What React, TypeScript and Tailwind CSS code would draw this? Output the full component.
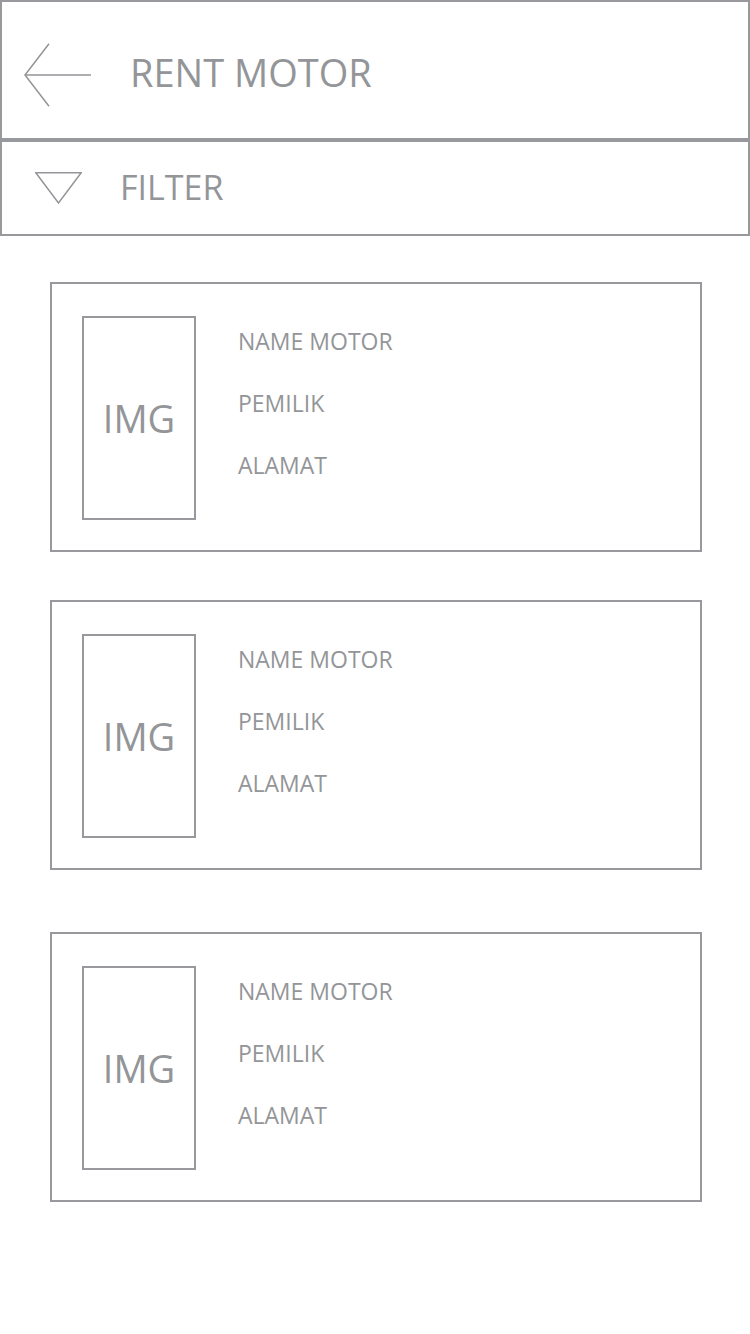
const gray = "#939598";

function MotorCard({ className = "" }: { className?: string }) {
  return (
    <div className={`h-[270px] border-2 border-[#97999c] flex items-start pl-[30px] pt-[32px] ${className}`}>
      <div className="w-[114px] h-[204px] border-2 border-[#97999c] flex items-center justify-center">
        <span className="text-[38px] leading-none text-[#939598]">IMG</span>
      </div>
      <div className="ml-[42px] pt-[10px] flex flex-col gap-[32px] text-[23px] leading-[30px] text-[#939598]">
        <span>NAME MOTOR</span>
        <span>PEMILIK</span>
        <span>ALAMAT</span>
      </div>
    </div>
  );
}

export default function App() {
  return (
    <div
      className="w-[750px] min-h-[1334px] bg-white"
      style={{ fontFamily: '"Open Sans", "Noto Sans", sans-serif' }}
    >
      {/* header */}
      <div className="h-[140px] border-2 border-[#97999c] flex items-start">
        <svg
          className="ml-[22px] mt-[41px]"
          width="68"
          height="64"
          viewBox="0 0 68 64"
          fill="none"
          stroke={gray}
          strokeWidth="1.5"
        >
          <path d="M25 0.8 L1 32 L25 63.2" />
          <path d="M1 32 H67" />
        </svg>
        <h1 className="ml-[38px] mt-[47px] text-[38px] leading-[46px] font-normal text-[#939598]">
          RENT MOTOR
        </h1>
      </div>

      {/* filter */}
      <div className="h-[96px] border-2 border-[#97999c] flex items-start">
        <svg
          className="ml-[33px] mt-[30px]"
          width="47"
          height="32"
          viewBox="0 0 47 32"
          fill="none"
          stroke={gray}
          strokeWidth="1.5"
        >
          <path d="M0.8 0.8 H46.2 L23.5 31 Z" strokeLinejoin="miter" />
        </svg>
        <span className="ml-[38px] mt-[24px] text-[34px] leading-[42px] text-[#939598]">
          FILTER
        </span>
      </div>

      {/* list */}
      <div className="pl-[50px] pr-[48px] pt-[46px] pb-[40px]">
        <MotorCard />
        <MotorCard className="mt-[48px]" />
        <MotorCard className="mt-[62px]" />
      </div>
    </div>
  );
}
